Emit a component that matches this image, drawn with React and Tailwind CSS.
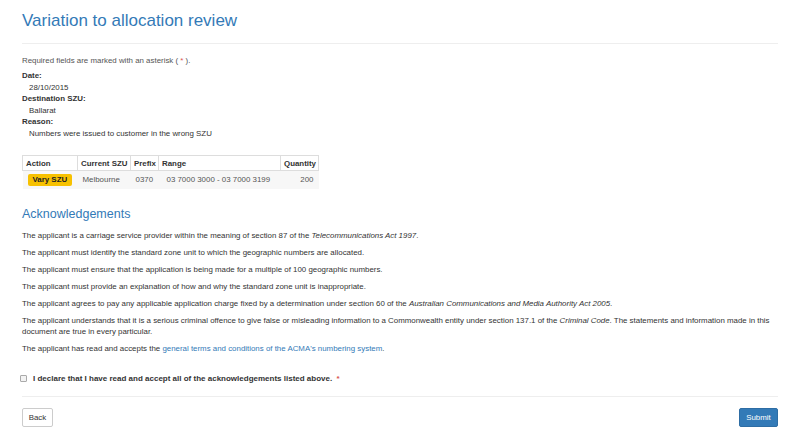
import React, { useState } from 'react'

const acks = [
  <>The applicant is a carriage service provider within the meaning of section 87 of the <em>Telecommunications Act 1997</em>.</>,
  <>The applicant must identify the standard zone unit to which the geographic numbers are allocated.</>,
  <>The applicant must ensure that the application is being made for a multiple of 100 geographic numbers.</>,
  <>The applicant must provide an explanation of how and why the standard zone unit is inappropriate.</>,
  <>The applicant agrees to pay any applicable application charge fixed by a determination under section 60 of the <em>Australian Communications and Media Authority Act 2005</em>.</>,
  <>The applicant understands that it is a serious criminal offence to give false or misleading information to a Commonwealth entity under section 137.1 of the <em>Criminal Code</em>. The statements and information made in this document are true in every particular.</>,
  <>The applicant has read and accepts the <a href="#" className="text-[#337ab7]">general terms and conditions of the ACMA's numbering system</a>.</>
]

const App = () => {
  const [agree, setAgree] = useState(false)

  return (
    <div className="min-h-screen bg-white px-[22px] text-[#333] text-[7.9px] leading-[11px]" style={{ fontFamily: '"Liberation Sans", Arial, sans-serif' }}>
      <div className="pt-[11px] pb-[12px] border-b border-[#eee]">
        <h2 className="text-[17px] leading-[20px] text-[#337ab7]">Variation to allocation review</h2>
      </div>

      <p className="mt-[11px] text-[#555]">Required fields are marked with an asterisk ( <span className="text-[#d9534f]">*</span> ).</p>

      <dl className="mt-[4px] leading-[11.5px]">
        <dt className="font-bold">Date:</dt>
        <dd className="pl-[7px]">28/10/2015</dd>
        <dt className="font-bold">Destination SZU:</dt>
        <dd className="pl-[7px]">Ballarat</dd>
        <dt className="font-bold">Reason:</dt>
        <dd className="pl-[7px]">Numbers were issued to customer in the wrong SZU</dd>
      </dl>

      <table className="mt-[16px] w-[296px] border-collapse table-fixed">
        <thead>
          <tr className="h-[15px] text-left">
            <th className="w-[55px] border border-[#ddd] px-[3px] font-bold">Action</th>
            <th className="w-[53px] border border-[#ddd] px-[3px] font-bold whitespace-nowrap">Current SZU</th>
            <th className="w-[28px] border border-[#ddd] px-[3px] font-bold">Prefix</th>
            <th className="w-[122px] border border-[#ddd] px-[3px] font-bold">Range</th>
            <th className="w-[38px] border border-[#ddd] px-[3px] font-bold">Quantity</th>
          </tr>
        </thead>
        <tbody>
          <tr className="h-[18px] bg-[#f7f7f7]">
            <td className="px-[5px]">
              <span className="inline-block rounded-[2px] bg-[#f7c100] px-[5px] leading-[12px] font-bold text-[#222]">Vary SZU</span>
            </td>
            <td className="px-[5px] text-[#555]">Melbourne</td>
            <td className="px-[5px] text-[#555]">0370</td>
            <td className="px-[8px] text-[#555] whitespace-nowrap">03 7000 3000 - 03 7000 3199</td>
            <td className="px-[5px] text-right text-[#555]">200</td>
          </tr>
        </tbody>
      </table>

      <h3 className="mt-[18px] text-[12.5px] leading-[14px] text-[#337ab7]">Acknowledgements</h3>

      <div className="mt-[9px] flex flex-col gap-[6px]">
        {acks.map((a, i) => <p key={i}>{a}</p>)}
      </div>

      <label className="mt-[19px] flex items-center gap-[5px] font-bold text-[8px]">
        <input type="checkbox" checked={agree} onChange={e => setAgree(e.target.checked)} className="appearance-none w-[7px] h-[7px] m-0 ml-[-2px] rounded-[1px] border border-[#aaa] bg-[#f3f3f3] checked:bg-[#337ab7]" />
        <span className="pl-[1px]">I declare that I have read and accept all of the acknowledgements listed above. <span className="text-[#d9534f] pl-[2px]">*</span></span>
      </label>

      <div className="mt-[12px] border-t border-[#eee] pt-[11px] flex justify-between">
        <button className="h-[19px] w-[31px] rounded-[2px] border border-[#ccc] bg-white text-[#333]">Back</button>
        <button className="h-[19px] w-[39px] rounded-[2px] border border-[#2e6da4] bg-[#337ab7] text-white">Submit</button>
      </div>
    </div>
  )
}

export default App
